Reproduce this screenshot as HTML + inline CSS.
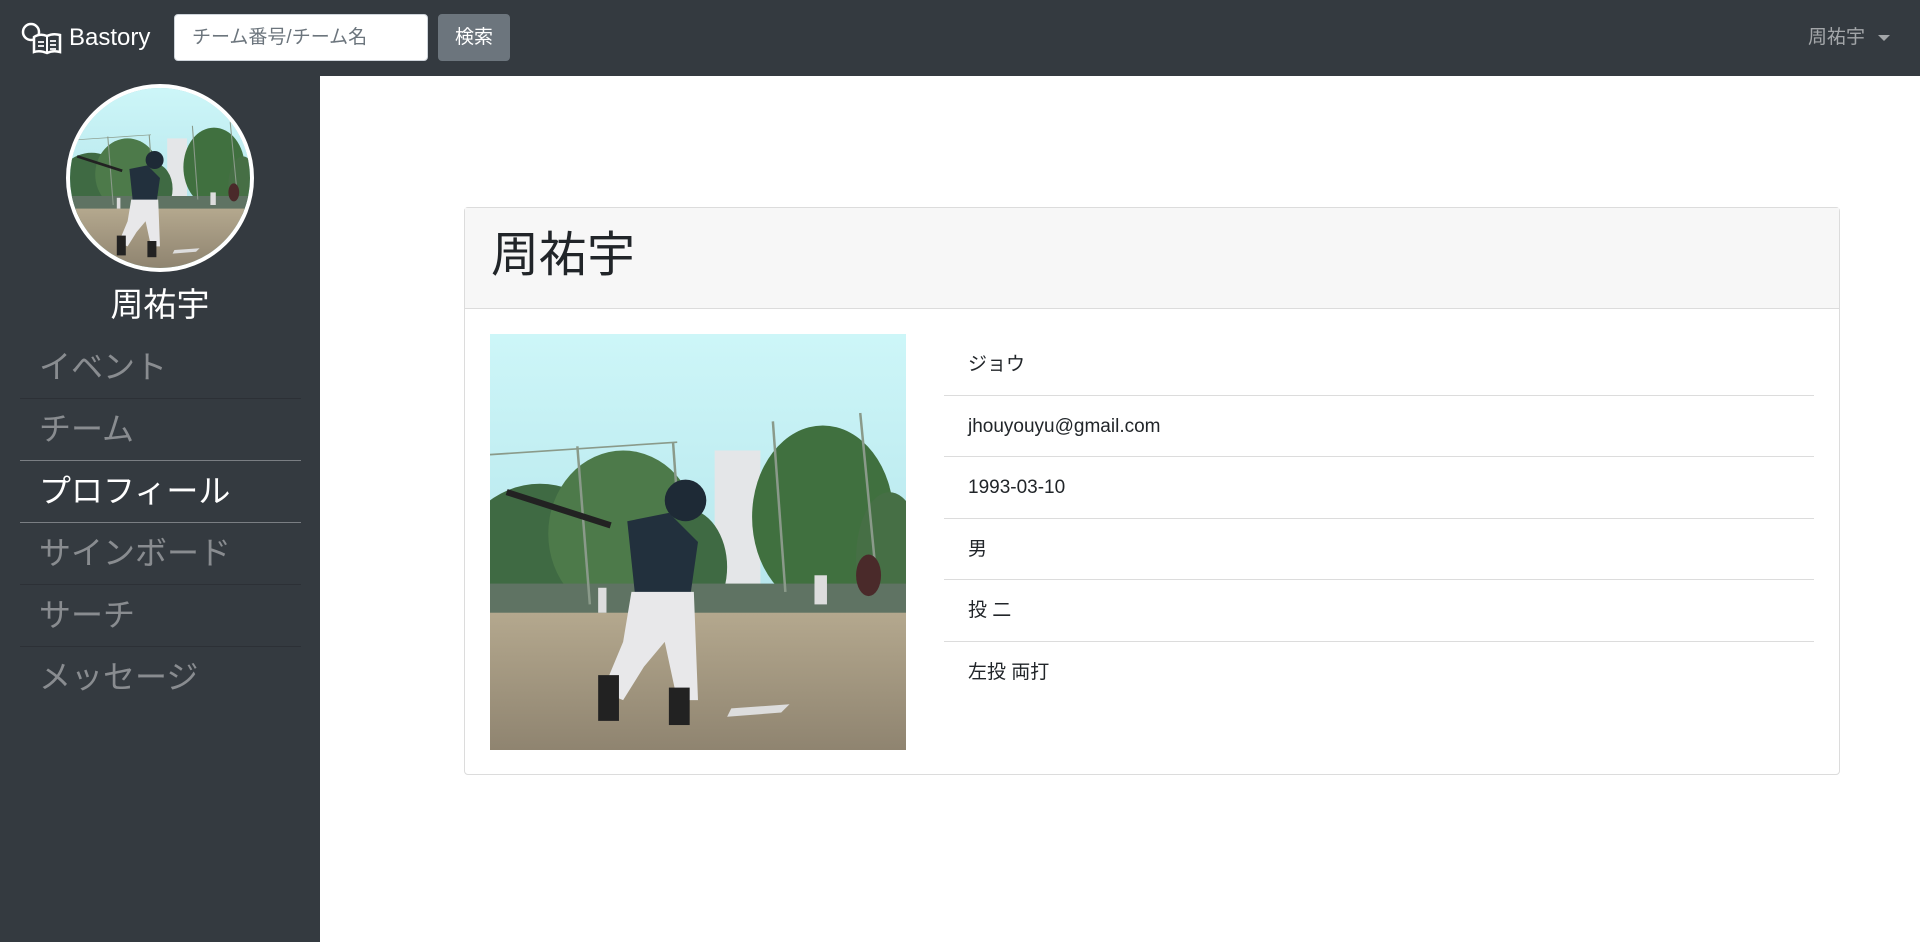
<!DOCTYPE html>
<html><head><meta charset="utf-8">
<style>
*{box-sizing:border-box;margin:0;padding:0}
body{width:1920px;height:942px;overflow:hidden;background:#fff;font-family:"Liberation Sans","Noto Sans CJK JP",sans-serif;position:relative}
.nav{position:absolute;left:0;top:0;width:1920px;height:76px;background:#343a40}
.brand{position:absolute;left:20px;top:18px;color:#fff;font-size:24px;display:flex;align-items:center}
.brand span{margin-left:7px;line-height:40px}
.search{position:absolute;left:174px;top:14px;width:254px;height:47px;background:#fff;border-radius:4px;border:1px solid #ced4da;color:#6c757d;font-size:19px;padding:0 17px;line-height:45px}
.btn{position:absolute;left:438px;top:14px;width:72px;height:47px;background:#6c757d;border-radius:4px;color:#fff;font-size:19px;text-align:center;line-height:47px}
.user{position:absolute;left:1808px;top:24px;color:rgba(255,255,255,.55);font-size:19px;line-height:28px}
.caret{position:absolute;left:1878px;top:35px;width:0;height:0;border-left:6px solid transparent;border-right:6px solid transparent;border-top:6px solid rgba(255,255,255,.55)}
.side{position:absolute;left:0;top:76px;width:320px;height:866px;background:#343a40}
.avatar{position:absolute;left:66px;top:84px;width:188px;height:188px;border-radius:50%;border:4px solid #fff;overflow:hidden;background:#9cc}
.avatar svg{width:100%;height:100%;display:block}
.sname{position:absolute;left:0;width:320px;top:283px;text-align:center;color:#fff;font-size:33px;line-height:44px}
.menu{position:absolute;left:20px;top:337px;width:281px}
.menu div{height:62px;line-height:60px;padding-left:19px;font-size:32px;color:rgba(255,255,255,.42);border-bottom:1px solid #2c3036}
.menu div.b{border-bottom-color:#7a7e83}
.menu div.act{color:#fff}
.card{position:absolute;left:464px;top:207px;width:1376px;height:568px;border:1px solid #dcdcdc;border-radius:4px}
.chead{height:101px;background:#f7f7f7;border-bottom:1px solid #dcdcdc;padding-left:26px;font-size:48px;color:#212529;line-height:96px}
.photo{position:absolute;left:25px;top:126px;width:416px;height:416px}
.photo svg{width:100%;height:100%;display:block}
.list{position:absolute;left:479px;top:126px;width:870px}
.list div{height:61.5px;padding-left:24px;font-size:19px;color:#212529;line-height:61px;border-bottom:1px solid #dcdcdc}
.list div:last-child{border-bottom:none}
</style></head><body>
<svg width="0" height="0" style="position:absolute">
<defs>
<symbol id="scene" viewBox="0 0 100 100" preserveAspectRatio="none">
<linearGradient id="sky" x1="0" y1="0" x2="0" y2="1"><stop offset="0" stop-color="#cdf6f8"/><stop offset="1" stop-color="#a9dde6"/></linearGradient>
<linearGradient id="gr" x1="0" y1="0" x2="0" y2="1"><stop offset="0" stop-color="#b4a88e"/><stop offset="1" stop-color="#8f8470"/></linearGradient>
<rect width="100" height="100" fill="url(#sky)"/>
<rect x="54" y="28" width="11" height="38" fill="#e4e6e8"/>
<ellipse cx="12" cy="56" rx="20" ry="20" fill="#3f6a43"/>
<ellipse cx="32" cy="48" rx="18" ry="20" fill="#4d7a4a"/>
<ellipse cx="47" cy="56" rx="10" ry="14" fill="#3f6a43"/>
<ellipse cx="80" cy="44" rx="17" ry="22" fill="#40703f"/>
<ellipse cx="96" cy="54" rx="8" ry="16" fill="#466f45"/>
<rect x="0" y="60" width="100" height="11" fill="#5f7363"/>
<rect x="0" y="67" width="100" height="33" fill="url(#gr)"/>
<line x1="21" y1="27" x2="24" y2="65" stroke="#8a9a8a" stroke-width=".6"/>
<line x1="44" y1="26" x2="45" y2="40" stroke="#8a9a8a" stroke-width=".6"/>
<line x1="68" y1="21" x2="71" y2="62" stroke="#8a9a8a" stroke-width=".6"/>
<line x1="89" y1="19" x2="93" y2="60" stroke="#8a9a8a" stroke-width=".6"/>
<line x1="0" y1="29" x2="45" y2="26" stroke="#8a9a8a" stroke-width=".4"/>
<line x1="4" y1="38" x2="29" y2="46" stroke="#222" stroke-width="1.5"/>
<path d="M33 45 L43 43 L50 50 L48 64 L35 64 Z" fill="#22303d"/>
<ellipse cx="47" cy="40" rx="5" ry="5" fill="#1e2a36"/>
<path d="M34 62 L49 62 L50 88 L45 88 L42 74 L37 80 L32 88 L27 86 L32 74 Z" fill="#e8e8ea"/>
<rect x="26" y="82" width="5" height="11" fill="#222"/>
<rect x="43" y="85" width="5" height="9" fill="#222"/>
<rect x="26" y="61" width="2" height="6" fill="#ddd"/>
<rect x="78" y="58" width="3" height="7" fill="#ddd"/>
<ellipse cx="91" cy="58" rx="3" ry="5" fill="#4a2a2a"/>
<path d="M58 90 L72 89 L70 91 L57 92 Z" fill="#ddd"/>
</symbol>
</defs>
</svg>
<div class="nav">
  <div class="brand">
    <svg width="42" height="36" viewBox="0 0 42 36"><circle cx="11" cy="12" r="8" fill="none" stroke="#fff" stroke-width="2.5"/><path d="M14 17 Q20 13 27 16 Q33 13 40 15 L40 32 Q33 30 27 33 Q20 30 14 32 Z" fill="#343a40" stroke="#fff" stroke-width="2.5"/><line x1="27" y1="16" x2="27" y2="33" stroke="#fff" stroke-width="2"/><path d="M18 22h6M18 26h6M30 21h6M30 25h6M30 29h6" stroke="#fff" stroke-width="1.8"/></svg>
    <span>Bastory</span>
  </div>
  <div class="search">チーム番号/チーム名</div>
  <div class="btn">検索</div>
  <div class="user">周祐宇</div>
  <div class="caret"></div>
</div>
<div class="side"></div>
<div class="avatar"><svg><use href="#scene" width="100%" height="100%"/></svg></div>
<div class="sname">周祐宇</div>
<div class="menu">
  <div>イベント</div>
  <div class="b">チーム</div>
  <div class="act b">プロフィール</div>
  <div>サインボード</div>
  <div>サーチ</div>
  <div style="border:none">メッセージ</div>
</div>
<div class="card">
  <div class="chead">周祐宇</div>
  <div class="photo"><svg><use href="#scene" width="100%" height="100%"/></svg></div>
  <div class="list">
    <div>ジョウ</div>
    <div>jhouyouyu@gmail.com</div>
    <div>1993-03-10</div>
    <div>男</div>
    <div>投 二</div>
    <div>左投 両打</div>
  </div>
</div>
</body></html>
